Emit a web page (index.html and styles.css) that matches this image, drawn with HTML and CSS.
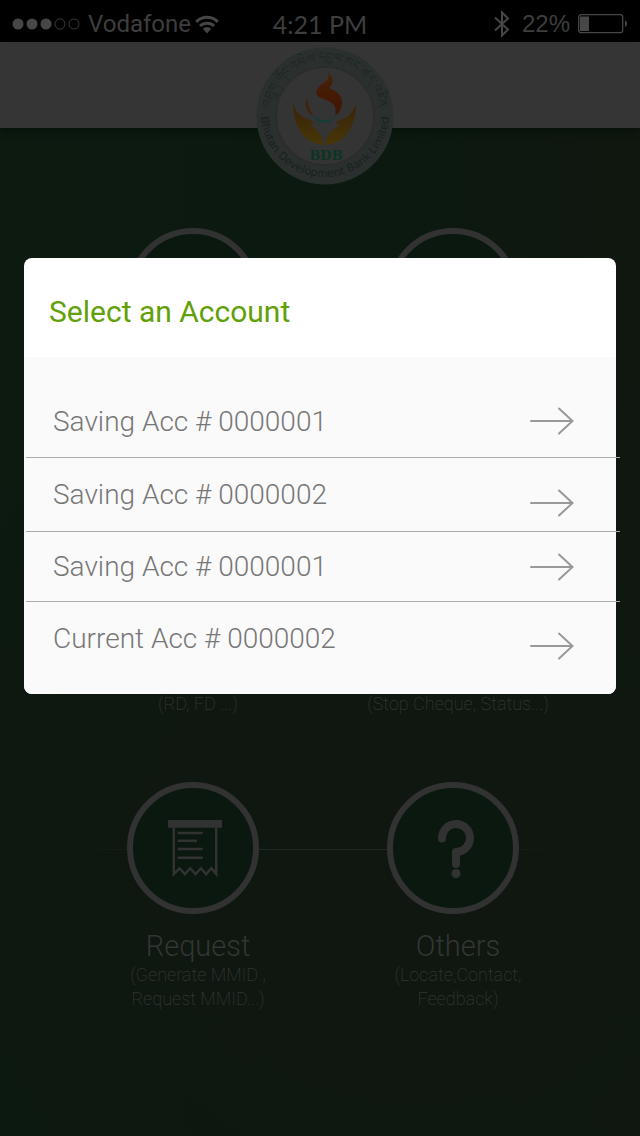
FILE: index.html
```html
<!DOCTYPE html>
<html lang="en">
<head>
<meta charset="utf-8">
<meta name="viewport" content="width=device-width, initial-scale=1">
<title>Select an Account</title>
<link rel="stylesheet" href="styles.css">
</head>
<body>
<div class="screen">
  <div class="status">
    <div class="status-left">
      <svg class="signal" width="68" height="12" viewBox="0 0 68 12" aria-hidden="true">
        <g fill="#474747"><circle cx="6" cy="6" r="5.5"/><circle cx="20" cy="6" r="5.5"/><circle cx="34" cy="6" r="5.5"/></g>
        <g fill="none" stroke="#3a3a3a"><circle cx="48" cy="6" r="5"/><circle cx="62" cy="6" r="5"/></g>
      </svg>
      <span class="carrier">Vodafone</span>
      <svg width="24" height="19" viewBox="0 0 24 19" aria-hidden="true">
        <g fill="none" stroke="#454545" stroke-width="3"><path d="M1.2 6.8C7.4 .8 16.600 .8 22.800 6.800"/><path d="M5 11C9 7.200 15 7.200 19 11"/></g>
        <path d="M7.800 13.800Q12 10.300 16.200 13.800L12 18.400Z" fill="#454545"/>
      </svg>
    </div>
    <time class="clock">4:21 PM</time>
    <div class="status-right">
      <svg width="16" height="28" viewBox="0 0 16 28" aria-hidden="true"><path d="M1 7.500L14 19.500L8 25.500V2.500L14 8.500L1 20.500" fill="none" stroke="#454545" stroke-width="2"/></svg>
      <span class="percent">22%</span>
      <svg width="50" height="20" viewBox="0 0 50 20" aria-hidden="true">
        <rect x=".7" y=".7" width="44" height="18" rx="2.500" fill="none" stroke="#474747" stroke-width="1.300"/>
        <rect x="2" y="2.500" width="9" height="14.500" fill="#474747"/>
        <path d="M47 6.500Q49 7 49 9.700Q49 12.500 47 13Z" fill="#474747"/>
      </svg>
    </div>
  </div>

  <header class="topbar">
    <svg class="logo" width="140" height="138" viewBox="0 0 140 138" role="img" aria-label="Bhutan Development Bank Limited">
      <defs>
        <path id="arc-top" d="M15 69A55 55 0 0 1 125 69"/>
        <path id="arc-bottom" d="M6 66A64 64 0 1 0 134 66"/>
        <linearGradient id="flame" x1="0" y1="0" x2="0" y2="1"><stop offset="0" stop-color="#452307"/><stop offset=".55" stop-color="#451a05"/><stop offset="1" stop-color="#3e1705"/></linearGradient>
        <linearGradient id="hands" x1="0" y1="0" x2="0" y2="1"><stop offset="0" stop-color="#39210a"/><stop offset="1" stop-color="#473707"/></linearGradient>
      </defs>
      <circle cx="70" cy="69" r="68" fill="#2b302f" stroke="#27332e"/>
      <circle cx="70" cy="69" r="49" fill="#343434" stroke="#2a2c2e" stroke-width="2"/>
      <text class="seal-script"><textPath href="#arc-top" startOffset="50%" text-anchor="middle">འབྲུག་གོང་འཕེལ་དངུལ་ཁང་ཚད་འཛིན</textPath></text>
      <text class="seal-name"><textPath href="#arc-bottom" startOffset="50%" text-anchor="middle">Bhutan Development Bank Limited</textPath></text>
      <path d="M73 25C79 31 79 37 74 41C84 45 88 50 87 57C86 64 83 67 80 69C82 60 79 56 71 53C62 50 59 47 63 41C67 35 76 35 73 25Z" fill="url(#flame)"/>
      <path d="M53 50C51 58 56 63 58 69C51 65 48 57 53 50Z" fill="#42220a"/>
      <path d="M57 66C61 78 76 80 81 67C77 75 64 76 57 66Z" fill="#153d36"/>
      <path d="M38 56C41 68 49 71 57 74C60 76 57 79 53 77C61 81 68 87 68.500 98C52 97 38 83 38 56Z" fill="url(#hands)"/>
      <path d="M101 56C98 68 91 71 83 74C80 76 83 79 87 77C79 81 71 87 70.500 98C87 97 101 83 101 56Z" fill="url(#hands)"/>
      <text class="seal-mark" x="71" y="113" text-anchor="middle">BDB</text>
    </svg>
  </header>

  <main class="menu">
    <div class="tile"><div class="ring"></div></div>
    <div class="tile"><div class="ring"></div></div>
    <div class="tile tile-caption"><p class="hint">(RD, FD ...)</p></div>
    <div class="tile tile-caption"><p class="hint">(Stop Cheque, Status...)</p></div>
    <a class="tile" href="#request">
      <span class="ring">
        <svg width="54" height="58" viewBox="0 0 56 58" aria-hidden="true">
          <path d="M0 0H56V8H0Z" fill="#323232"/>
          <path d="M6 8V56L12 50L17.500 56L23 50L28.500 56L34 50L39.500 56L45 50L50 56V8" fill="none" stroke="#323232" stroke-width="2.600"/>
          <path d="M10 13.500H36M10 21.500H30M10 30H36M10 39H36" stroke="#323232" stroke-width="2.600"/>
        </svg>
      </span>
      <span class="label">Request</span>
      <span class="hint">(Generate MMID ,<br>Request MMID...)</span>
    </a>
    <a class="tile" href="#others">
      <span class="ring">
        <svg width="38" height="60" viewBox="0 0 38 60" aria-hidden="true">
          <path d="M6 20.500A14 14 0 1 1 20 34V46" fill="none" stroke="#323232" stroke-width="8" stroke-linecap="round" stroke-linejoin="round"/>
          <circle cx="20" cy="55.500" r="4.500" fill="#323232"/>
        </svg>
      </span>
      <span class="label">Others</span>
      <span class="hint">(Locate,Contact,<br>Feedback)</span>
    </a>
  </main>

  <section class="dialog" role="dialog" aria-labelledby="dialog-title">
    <h1 class="dialog-title" id="dialog-title">Select an Account</h1>
    <div class="dialog-body">
      <ul class="accounts">
        <li><button class="account" type="button">Saving Acc # 0000001<svg class="arrow" width="44" height="28" viewBox="0 0 44 28" aria-hidden="true"><path d="M1 14H42M29 1.500L42.500 14L29 26.500"/></svg></button></li>
        <li><button class="account" type="button">Saving Acc # 0000002<svg class="arrow" width="44" height="28" viewBox="0 0 44 28" aria-hidden="true"><path d="M1 14H42M29 1.500L42.500 14L29 26.500"/></svg></button></li>
        <li><button class="account" type="button">Saving Acc # 0000001<svg class="arrow" width="44" height="28" viewBox="0 0 44 28" aria-hidden="true"><path d="M1 14H42M29 1.500L42.500 14L29 26.500"/></svg></button></li>
        <li><button class="account" type="button">Current Acc # 0000002<svg class="arrow" width="44" height="28" viewBox="0 0 44 28" aria-hidden="true"><path d="M1 14H42M29 1.500L42.500 14L29 26.500"/></svg></button></li>
      </ul>
    </div>
  </section>
</div>
</body>
</html>
```

FILE: styles.css
```css
* {
  box-sizing: border-box;
}

body {
  margin: 0;
  font-family: Roboto, "Liberation Sans", sans-serif;
  background: #0d1810;
}

.screen {
  position: relative;
  min-height: 100vh;
  background:
    radial-gradient(circle at 65% 75%, #0f1710 0, #0e1710 30%, transparent 60%),
    linear-gradient(90deg, #0c1a10, #0b1910 60%, #10170f);
}

.status {
  display: grid;
  grid-template-columns: 1fr auto 1fr;
  align-items: center;
  height: 42px;
  padding: 6px 12px 0;
  background: #000;
  color: #3e3e3e;
}

.status-left,
.status-right {
  display: flex;
  align-items: center;
}

.status-left {
  gap: 4px;
}

.signal {
  margin-right: 4px;
}

.status-right {
  gap: 12px;
  justify-content: flex-end;
}

.status-right svg:last-child {
  margin-left: -4px;
}

.carrier {
  font-size: 24px;
}

.clock {
  font-family: Lato, sans-serif;
  font-size: 25px;
}

.percent {
  font-family: "Liberation Sans", Arial, sans-serif;
  font-size: 24px;
}

.topbar {
  display: flex;
  justify-content: center;
  height: 86px;
  padding: 5px 0 0 10px;
  background: #353535;
  box-shadow: 0 2px 8px #04100a;
}

.logo {
  flex: none;
}

.seal-script {
  font: 12px "Noto Sans", sans-serif;
  fill: #1d2725;
}

.seal-name {
  font: 11px "DejaVu Sans", sans-serif;
  fill: #17221e;
}

.seal-mark {
  font: 700 13px "DejaVu Serif", serif;
  fill: #0c3424;
}

.menu {
  display: grid;
  grid-template-columns: 1fr 1fr;
  grid-template-rows: 276px 278px auto;
  padding: 100px 57px 0 63px;
  background: linear-gradient(90deg, transparent, #1d2820 30%, #1d2820 70%, transparent) center 721px / 500px 1px no-repeat;
}

.tile {
  display: flex;
  flex-direction: column;
  align-items: center;
  color: #323632;
  text-align: center;
  text-decoration: none;
}

.tile-caption {
  justify-content: flex-end;
  padding-bottom: 66px;
}

.ring {
  display: flex;
  align-items: center;
  justify-content: center;
  width: 132px;
  height: 132px;
  padding-left: 3px;
  border: 6px solid #323232;
  border-radius: 50%;
  background: #0a1810;
}

.label {
  margin: 15px 0 0 10px;
  font-size: 29px;
  font-weight: 300;
  line-height: 34px;
}

.hint {
  margin: 0 0 0 10px;
  color: #303631;
  font-size: 18px;
  font-weight: 200;
  line-height: 24px;
}

.dialog {
  position: absolute;
  top: 258px;
  left: 24px;
  right: 24px;
  border-radius: 8px;
  background: #fff;
}

.dialog-title {
  margin: 0;
  padding: 36px 25px 27px;
  color: #62a008;
  font-size: 30px;
  font-weight: 400;
  line-height: 36px;
}

.dialog-body {
  padding: 28px 0 20px;
  border-radius: 0 0 8px 8px;
  background: #fafafa;
}

.accounts {
  display: grid;
  grid-template-rows: 73px 74px 70px 72px;
  margin: 0 -4px 0 2px;
  padding: 0;
  list-style: none;
}

.accounts li {
  display: flex;
  border-bottom: 1px solid #a9adaa;
}

.accounts li:last-child {
  border-bottom: 0;
}

.account {
  display: flex;
  flex: 1;
  align-items: center;
  justify-content: space-between;
  padding: 0 46px 0 27px;
  border: 0;
  background: none;
  color: #777;
  font: 300 28px Roboto, "Liberation Sans", sans-serif;
  text-align: left;
}

.arrow {
  fill: none;
  stroke: #999;
  stroke-width: 2;
  stroke-linecap: round;
}

.accounts li:nth-child(even) .arrow {
  align-self: flex-end;
  margin-bottom: 14px;
}
```
